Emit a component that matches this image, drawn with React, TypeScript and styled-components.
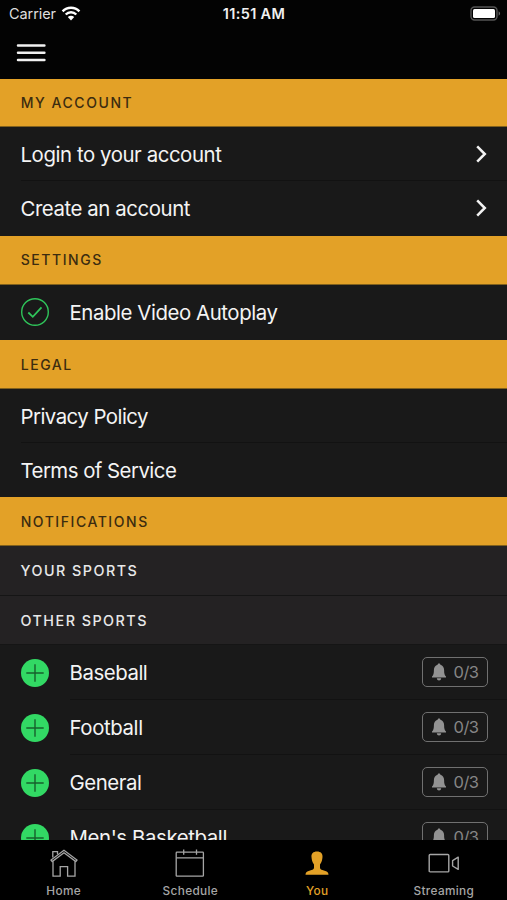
import * as React from "react";
import styled, { createGlobalStyle } from "styled-components";

const GlobalStyle = createGlobalStyle`
  * {
    box-sizing: border-box;
  }

  body {
    margin: 0;
    background: #000;
    font-family: Inter, "Liberation Sans", sans-serif;
    overflow: hidden;
  }

  svg {
    display: block;
    flex: none;
  }
`;

const Screen = styled.div`
  display: flex;
  flex-direction: column;
  width: 507px;
  height: 900px;
  background: #191919;
  color: #f4f4f4;
  overflow: hidden;
`;

const Header = styled.header`
  flex: none;
  height: 79px;
  background: #030303;
`;

const StatusBar = styled.div`
  display: grid;
  grid-template-columns: 1fr auto 1fr;
  align-items: center;
  height: 27px;
  padding: 0 6px 0 9px;
`;

const Carrier = styled.div`
  display: flex;
  align-items: center;
  gap: 5px;
  font-size: 14.5px;
  letter-spacing: -0.08px;
  color: #dedede;
`;

const Time = styled.div`
  margin-right: 2px;
  font-size: 14.5px;
  font-weight: 600;
  letter-spacing: 0.35px;
  color: #f0f0f0;
`;

const BatteryIcon = styled.svg`
  justify-self: end;
`;

const MenuButton = styled.button`
  display: block;
  margin: 16px 0 0 16px;
  padding: 0;
  border: none;
  background: none;
`;

const List = styled.main`
  flex: 1;
  min-height: 0;
  overflow: hidden;
`;

const SectionTitle = styled.h2<{ $height: number }>`
  display: flex;
  align-items: center;
  height: ${(p) => p.$height}px;
  margin: 0;
  padding-left: 20.7px;
  border-bottom: 1px solid #80601d;
  background: #e3a127;
  color: #3c2c10;
  font-size: 14px;
  font-weight: 500;
  letter-spacing: 1.55px;
`;

const SubTitle = styled.h3<{ $height: number }>`
  display: flex;
  align-items: center;
  height: ${(p) => p.$height}px;
  margin: 0;
  padding-left: 20.5px;
  border-bottom: 1px solid #151515;
  background: #242223;
  color: #e8e8e8;
  font-size: 14.3px;
  font-weight: 500;
  letter-spacing: 1.5px;
`;

const Row = styled.div<{ $height: number }>`
  display: flex;
  align-items: stretch;
  height: ${(p) => p.$height}px;
  padding-left: 21px;
`;

const RowIcon = styled.div`
  display: flex;
  align-items: center;
  width: 49px;
`;

const RowBody = styled.div<{ $line?: boolean }>`
  flex: 1;
  display: flex;
  align-items: center;
  justify-content: space-between;
  padding-right: 19px;
  border-bottom: 1px solid ${(p) => (p.$line ? "#121212" : "transparent")};
`;

const Label = styled.span<{ $spacing?: number }>`
  margin-left: -0.5px;
  padding-top: 1.5px;
  font-size: 20.4px;
  letter-spacing: ${(p) => p.$spacing ?? -0.43}px;
  white-space: nowrap;
`;

const Badge = styled.div`
  display: flex;
  align-items: center;
  gap: 7.5px;
  width: 66px;
  height: 30px;
  padding-left: 9px;
  border: 1.5px solid #707070;
  border-radius: 5px;
  color: #868686;
  font-size: 16.5px;
  letter-spacing: -0.5px;
`;

const TabBar = styled.nav`
  flex: none;
  display: grid;
  grid-template-columns: repeat(4, 1fr);
  height: 60px;
  background: #000;
`;

const Tab = styled.div<{ $active?: boolean }>`
  display: flex;
  flex-direction: column;
  align-items: center;
  gap: 7px;
  padding-top: 8px;
  padding-left: 0.5px;
  color: ${(p) => (p.$active ? "#e3a127" : "#a6a6a6")};
  font-size: 11.8px;
  font-weight: 500;
  line-height: 14px;
  letter-spacing: 0.35px;
`;

const MenuIcon = () => (
  <svg width="30" height="20" viewBox="0 0 30 20" stroke="#f2f2f2" strokeWidth="2.5" strokeLinecap="round">
    <path d="M2 2.6H28.4M2 9.7H28.4M2 16.9H28.4" />
  </svg>
);

const Chevron = () => (
  <svg width="14" height="20" viewBox="0 0 14 20" fill="none">
    <path d="M3.2 2.4L10.8 10L3.2 17.6" stroke="#f2f2f2" strokeWidth="2.5" />
  </svg>
);

const CheckIcon = () => (
  <svg width="28" height="28" viewBox="0 0 28 28" fill="none" stroke="#2fc45a">
    <circle cx="14" cy="14" r="13.3" strokeWidth="1.4" />
    <path d="M7.3 14.5L11.8 18.8L20.5 9.3" strokeWidth="1.8" />
  </svg>
);

const PlusIcon = () => (
  <svg width="28" height="28" viewBox="0 0 28 28">
    <circle cx="14" cy="14" r="14" fill="#32d964" />
    <path d="M14 5.3V22.7M5.3 14H22.7" stroke="#17602c" strokeWidth="1.4" />
  </svg>
);

const BellIcon = () => (
  <svg width="14" height="18" viewBox="0 0 14 18" fill="#929292">
    <path d="M7 0.5C7.8 0.5 8.3 1 8.4 1.8C10.8 2.5 12.1 4.5 12.1 7C12.1 10.6 12.5 12.2 14 13.4V14.6H0V13.4C1.5 12.2 1.9 10.6 1.9 7C1.9 4.5 3.2 2.5 5.6 1.8C5.7 1 6.2 0.5 7 0.5Z" />
    <path d="M4.8 15.2H9.2C9 16.7 8.2 17.4 7 17.4C5.8 17.4 5 16.7 4.8 15.2Z" />
  </svg>
);

const WifiIcon = () => (
  <svg width="20" height="15" viewBox="0 0 20 15" fill="none" stroke="#fff">
    <path d="M1.6 5.3C6.2 0.6 13.8 0.6 18.4 5.3" strokeWidth="2.5" />
    <path d="M4.7 8.5C7.7 5.5 12.3 5.5 15.3 8.5" strokeWidth="2.4" />
    <path d="M10 14.4L6.8 11.1C8.6 9.4 11.4 9.4 13.2 11.1Z" fill="#fff" stroke="none" />
  </svg>
);

const HomeIcon = () => (
  <svg width="28" height="29" viewBox="0 0 28 29" fill="none" stroke="currentColor" strokeWidth="1.3">
    <path d="M14 2.2L1 12L2.2 13.5L14 4.7L25.8 13.5L27 12Z" />
    <path d="M2.8 9.5V3.6H7.5V6.2" />
    <path d="M3 13.3V28.2H10.2V18.6H17.6V28.2H25V13.3" />
  </svg>
);

const ScheduleIcon = () => (
  <svg width="30" height="29" viewBox="0 0 30 29" fill="none" stroke="currentColor" strokeWidth="1.3">
    <rect x="1.2" y="4.2" width="27.2" height="24" rx="0.8" />
    <path d="M1.2 9.9H28.4M8.7 1.6V6.8M21.5 1.6V6.8" />
  </svg>
);

const YouIcon = () => (
  <svg width="24" height="29" viewBox="0 0 24 29" fill="currentColor">
    <path d="M12 3.4C15.8 3.4 17.8 5.5 17.5 9C17.3 11.8 16.7 14.5 15 16.4V19.8C15 21.6 17.3 22.2 20.3 23C22.4 23.6 23.4 24.7 23.5 26.7H0.5C0.6 24.7 1.6 23.6 3.7 23C6.7 22.2 9 21.6 9 19.8V16.4C7.3 14.5 6.7 11.8 6.5 9C6.2 5.5 8.2 3.4 12 3.4Z" />
  </svg>
);

const StreamingIcon = () => (
  <svg width="32" height="29" viewBox="0 0 32 29" fill="none" stroke="currentColor" strokeWidth="1.4">
    <rect x="1.2" y="6.5" width="19.6" height="17.4" rx="1" />
    <path d="M30.2 9.2V21.4L24.6 18V12.6Z" strokeLinejoin="round" />
  </svg>
);

const sports = [
  { name: "Baseball", spacing: -0.45 },
  { name: "Football", spacing: -0.4 },
  { name: "General", spacing: -0.45 },
  { name: "Men's Basketball", spacing: -0.4 },
];

function App() {
  return (
    <>
      <GlobalStyle />
      <Screen>
        <Header>
          <StatusBar>
            <Carrier>
              Carrier
              <WifiIcon />
            </Carrier>
            <Time>11:51 AM</Time>
            <BatteryIcon width="31" height="15" viewBox="0 0 31 15">
              <rect x="1" y="1" width="26" height="13" rx="3.5" fill="none" stroke="#555" strokeWidth="1.4" />
              <rect x="3" y="3" width="22" height="9" rx="1.5" fill="#fff" />
              <path d="M28.6 5.2C30.6 6.2 30.6 8.8 28.6 9.8Z" fill="#666" />
            </BatteryIcon>
          </StatusBar>
          <MenuButton aria-label="Menu">
            <MenuIcon />
          </MenuButton>
        </Header>

        <List>
          <SectionTitle $height={48}>MY ACCOUNT</SectionTitle>
          <Row $height={54}>
            <RowBody $line>
              <Label>Login to your account</Label>
              <Chevron />
            </RowBody>
          </Row>
          <Row $height={54.5}>
            <RowBody>
              <Label>Create an account</Label>
              <Chevron />
            </RowBody>
          </Row>

          <SectionTitle $height={49}>SETTINGS</SectionTitle>
          <Row $height={55.5}>
            <RowIcon>
              <CheckIcon />
            </RowIcon>
            <RowBody>
              <Label>Enable Video Autoplay</Label>
            </RowBody>
          </Row>

          <SectionTitle $height={49}>LEGAL</SectionTitle>
          <Row $height={54}>
            <RowBody $line>
              <Label $spacing={-0.53}>Privacy Policy</Label>
            </RowBody>
          </Row>
          <Row $height={54}>
            <RowBody>
              <Label $spacing={-0.53}>Terms of Service</Label>
            </RowBody>
          </Row>

          <SectionTitle $height={49}>NOTIFICATIONS</SectionTitle>
          <SubTitle $height={50}>YOUR SPORTS</SubTitle>
          <SubTitle $height={49}>OTHER SPORTS</SubTitle>
          {sports.map((sport) => (
            <Row key={sport.name} $height={55}>
              <RowIcon>
                <PlusIcon />
              </RowIcon>
              <RowBody $line>
                <Label $spacing={sport.spacing}>{sport.name}</Label>
                <Badge>
                  <BellIcon />
                  0/3
                </Badge>
              </RowBody>
            </Row>
          ))}
        </List>

        <TabBar>
          <Tab>
            <HomeIcon />
            Home
          </Tab>
          <Tab>
            <ScheduleIcon />
            Schedule
          </Tab>
          <Tab $active>
            <YouIcon />
            You
          </Tab>
          <Tab>
            <StreamingIcon />
            Streaming
          </Tab>
        </TabBar>
      </Screen>
    </>
  );
}

export default App;
